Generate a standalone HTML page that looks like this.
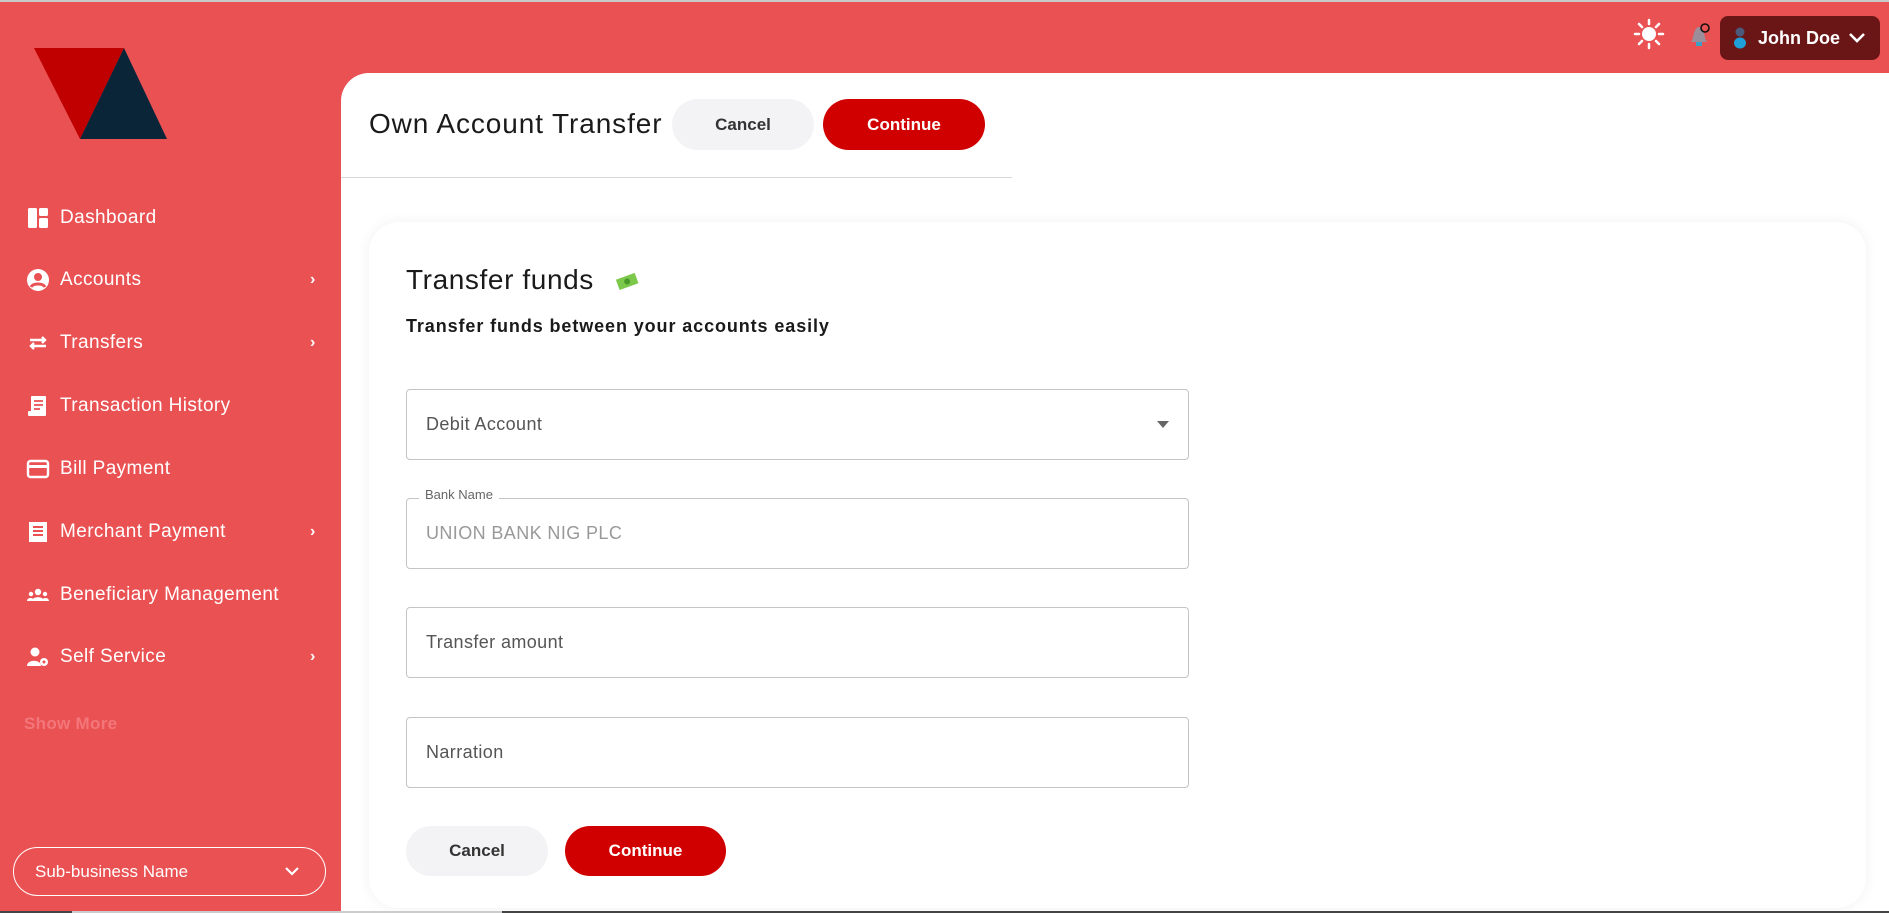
<!DOCTYPE html>
<html><head><meta charset="utf-8"><style>
*{box-sizing:border-box;margin:0;padding:0}
body{width:1889px;height:913px;overflow:hidden;background:#EA5153;font-family:"Liberation Sans",sans-serif;position:relative}
.abs{position:absolute}
.nav{position:absolute;left:26px;width:300px;height:30px;display:flex;align-items:center;color:#fff;font-size:19px;letter-spacing:0.4px}
.nav svg{width:24px;height:24px;margin-right:10px;flex:none}
.nav .chev{position:absolute;left:284px;top:6px;font-size:16px;font-weight:bold}
.btn{position:absolute;border-radius:26px;display:flex;align-items:center;justify-content:center;font-size:17px;font-weight:bold}
.cancel{background:#F3F3F5;color:#333}
.cont{background:#D10000;color:#fff}
.field{position:absolute;left:406px;width:783px;height:71px;border:1px solid #c4c4c4;border-radius:4px;font-size:18px;color:#555;padding-left:19px;display:flex;align-items:center;letter-spacing:0.4px}
</style></head><body>
<div class="abs" style="left:0;top:0;width:1889px;height:2px;background:#c9c9c9"></div>
<svg class="abs" style="left:0;top:0" width="200" height="160"><polygon points="34,48 124,48 80,139" fill="#C00000"/><polygon points="124,48 80,139 167,139" fill="#0B2538"/></svg>

<div class="nav" style="top:203px"><svg viewBox="0 0 24 24"><rect x="2" y="2" width="9" height="20" rx="1.5" fill="#fff"/><rect x="13" y="2" width="9" height="8" rx="1.5" fill="#fff"/><rect x="13" y="12" width="9" height="10" rx="1.5" fill="#fff"/></svg>Dashboard</div>
<div class="nav" style="top:265px"><svg viewBox="0 0 24 24"><circle cx="12" cy="12" r="11" fill="#fff"/><circle cx="12" cy="9" r="4" fill="#EA5153"/><path d="M5 19c2-4 12-4 14 0" stroke="#EA5153" stroke-width="3" fill="none"/></svg>Accounts<span class="chev">›</span></div>
<div class="nav" style="top:328px"><svg viewBox="0 0 24 24"><path d="M4 9h15M16 6l3 3-3 3M20 15H5M8 12l-3 3 3 3" stroke="#fff" stroke-width="2.4" fill="none"/></svg>Transfers<span class="chev">›</span></div>
<div class="nav" style="top:391px"><svg viewBox="0 0 24 24"><rect x="5" y="2" width="15" height="20" rx="1" fill="#fff"/><rect x="2" y="17" width="8" height="5" rx="1" fill="#fff"/><path d="M8 7h9M8 11h9M8 15h6" stroke="#EA5153" stroke-width="1.8"/></svg>Transaction History</div>
<div class="nav" style="top:454px"><svg viewBox="0 0 24 24"><rect x="2" y="4" width="20" height="16" rx="2.5" fill="none" stroke="#fff" stroke-width="2.4"/><rect x="2" y="8" width="20" height="3" fill="#fff"/></svg>Bill Payment</div>
<div class="nav" style="top:517px"><svg viewBox="0 0 24 24"><rect x="3" y="2" width="18" height="20" fill="#fff"/><path d="M7 7h10M7 11h10M7 15h10" stroke="#EA5153" stroke-width="2"/></svg>Merchant Payment<span class="chev">›</span></div>
<div class="nav" style="top:580px"><svg viewBox="0 0 24 24"><circle cx="12" cy="9" r="3.2" fill="#fff"/><path d="M6 18c0-5 12-5 12 0z" fill="#fff"/><circle cx="5" cy="11" r="2.2" fill="#fff"/><circle cx="19" cy="11" r="2.2" fill="#fff"/><path d="M1 18c0-4 7-4 7 0zM16 18c0-4 7-4 7 0z" fill="#fff"/></svg>Beneficiary Management</div>
<div class="nav" style="top:642px"><svg viewBox="0 0 24 24"><circle cx="9" cy="7" r="4.5" fill="#fff"/><path d="M1 21c0-7 14-7 14 0z" fill="#fff"/><circle cx="18" cy="17" r="4" fill="#fff"/><circle cx="18" cy="17" r="1.5" fill="#EA5153"/></svg>Self Service<span class="chev">›</span></div>
<div class="abs" style="left:24px;top:714px;color:#F3777A;font-size:17px;font-weight:bold;letter-spacing:0.3px">Show More</div>
<div class="abs" style="left:13px;top:847px;width:313px;height:49px;border:1.5px solid #fff;border-radius:25px;color:#fff;font-size:17px;padding-left:21px;display:flex;align-items:center">Sub-business Name<svg class="abs" style="left:270px;top:17px" width="16" height="12"><path d="M2 3l6 6 6-6" stroke="#fff" stroke-width="2.2" fill="none"/></svg></div>

<svg class="abs" style="left:1633px;top:18px" width="32" height="32" viewBox="0 0 32 32"><circle cx="16" cy="16" r="7" fill="#fff"/><g stroke="#fff" stroke-width="2.5" stroke-linecap="round"><path d="M16 2v4M16 26v4M2 16h4M26 16h4M6 6l3 3M23 23l3 3M6 26l3-3M23 9l3-3"/></g></svg>
<svg class="abs" style="left:1686px;top:20px" width="30" height="30"><path d="M5 22c3-3 2-14 8-15 6 1 5 12 8 15z" fill="#9b8e9a"/><rect x="10" y="22" width="6" height="4" fill="#3aa0c8"/><circle cx="19" cy="8" r="4" fill="none" stroke="#111" stroke-width="1.6"/></svg>
<div class="abs" style="left:1720px;top:16px;width:160px;height:44px;background:#6B1616;border-radius:8px;color:#fff;font-weight:bold;font-size:18px;display:flex;align-items:center;padding-left:38px">John Doe
<svg class="abs" style="left:12px;top:10px" width="16" height="24"><circle cx="8" cy="6" r="4.5" fill="#4b5a7a"/><ellipse cx="8" cy="17" rx="6" ry="5.5" fill="#1f9fd8"/></svg>
<svg class="abs" style="left:128px;top:15px" width="18" height="14"><path d="M2 3l7 7 7-7" stroke="#fff" stroke-width="2.6" fill="none"/></svg></div>

<div class="abs" style="left:341px;top:73px;width:1548px;height:840px;background:#fff;border-top-left-radius:28px"></div>
<div class="abs" style="left:341px;top:177px;width:671px;height:1px;background:#d6d6d6"></div>
<div class="abs" style="left:369px;top:108px;font-size:28px;color:#1a1a1a;letter-spacing:0.9px">Own Account Transfer</div>
<div class="btn cancel" style="left:672px;top:99px;width:142px;height:51px">Cancel</div>
<div class="btn cont" style="left:823px;top:99px;width:162px;height:51px">Continue</div>

<div class="abs" style="left:369px;top:222px;width:1497px;height:686px;background:#fff;border-radius:30px;box-shadow:0 0 14px rgba(0,0,0,0.06)"></div>
<div class="abs" style="left:406px;top:264px;font-size:28px;color:#1a1a1a;letter-spacing:0.6px">Transfer funds</div>
<svg class="abs" style="left:615px;top:271px" width="24" height="20"><g transform="rotate(-20 12 10)"><rect x="2" y="5" width="20" height="11" fill="#7cc84a"/><circle cx="12" cy="10.5" r="3" fill="#4a9a2a"/></g></svg>
<div class="abs" style="left:406px;top:316px;font-size:18px;font-weight:bold;color:#1a1a1a;letter-spacing:0.9px">Transfer funds between your accounts easily</div>

<div class="field" style="top:389px">Debit Account<svg class="abs" style="left:750px;top:31px" width="12" height="8"><path d="M0 0h12L6 7z" fill="#666"/></svg></div>
<div class="field" style="top:498px;color:#999">UNION BANK NIG PLC</div>
<div class="abs" style="left:419px;top:487px;background:#fff;padding:0 6px;font-size:13px;color:#666">Bank Name</div>
<div class="field" style="top:607px">Transfer amount</div>
<div class="field" style="top:717px">Narration</div>
<div class="btn cancel" style="left:406px;top:826px;width:142px;height:50px">Cancel</div>
<div class="btn cont" style="left:565px;top:826px;width:161px;height:50px">Continue</div>

<div class="abs" style="left:0;top:911px;width:1889px;height:2px;background:#444"></div>
<div class="abs" style="left:72px;top:911px;width:430px;height:2px;background:#ccc"></div>
</body></html>
